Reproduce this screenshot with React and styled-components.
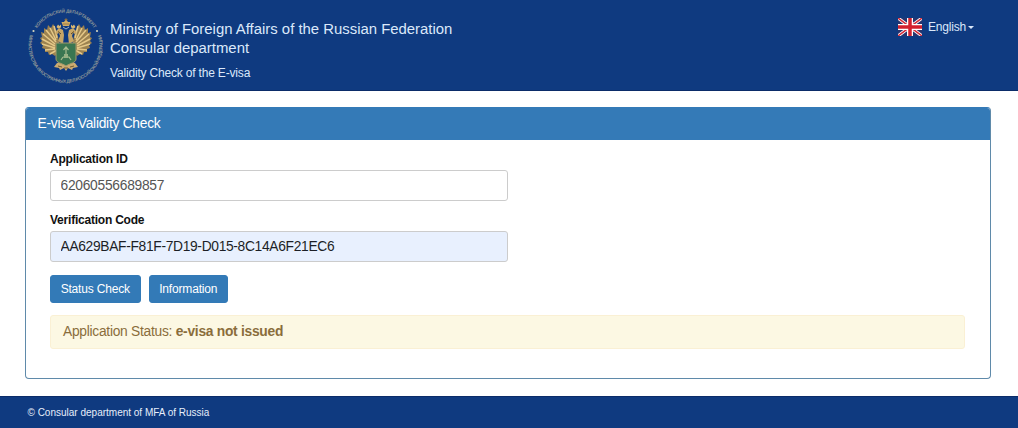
import React from 'react'
import styled, {createGlobalStyle, css} from 'styled-components'

const GlobalStyle = createGlobalStyle`
  * {
    box-sizing: border-box;
  }

  body {
    margin: 0;
    background: #fff;
    color: #111;
    font-family: "Liberation Sans", Arial, sans-serif;
  }
`

const small = css`
  font-size: 12px;
  letter-spacing: -0.18px;
`

const medium = css`
  font-size: 13.8px;
  letter-spacing: -0.27px;
`

const Page = styled.div`
  display: flex;
  flex-direction: column;
  height: 428px;
`

const TopBar = styled.header`
  display: flex;
  align-items: flex-start;
  height: 91px;
  padding: 7px 44px 0 27px;
  background: #0f3a80;
  border-bottom: 1px solid #0b2c69;
  color: #dbe8fa;
`

const Titles = styled.div`
  flex: 1;
  margin: 13px 0 0 7px;
`

const SiteName = styled.div`
  font-size: 14.9px;
  line-height: 19px;
`

const SiteSection = styled.div`
  ${small}
  margin-top: 7px;
  line-height: 16px;
`

const Language = styled.div`
  ${small}
  display: flex;
  align-items: center;
  margin-top: 10px;
  line-height: 20px;

  svg {
    margin-right: 5.5px;
  }
`

const Caret = styled.span`
  margin-left: 2px;
  border-top: 3.5px solid;
  border-right: 3.5px solid transparent;
  border-left: 3.5px solid transparent;
`

const Panel = styled.section`
  height: 272px;
  margin: 16px 27px 0 25px;
  border: 1px solid #5f8aaa;
  border-top-color: #347ab7;
  border-radius: 4px;
  overflow: hidden;
`

const PanelHeading = styled.h1`
  ${medium}
  height: 32px;
  margin: 0;
  padding-left: 11.5px;
  background: #347ab7;
  color: #fff;
  font-weight: 400;
  line-height: 31px;
`

const PanelBody = styled.div`
  padding: 11px 25px 0 24px;
`

const Label = styled.label`
  ${small}
  display: block;
  height: 19px;
  font-weight: 700;
  letter-spacing: -0.22px;
  line-height: 16px;
`

const Input = styled.input`
  ${medium}
  display: block;
  width: 458px;
  height: 31px;
  margin-bottom: 11px;
  padding: 0 9.5px 1px;
  border: 1px solid #ccc;
  border-radius: 3px;
  background: #fff;
  color: #555;
  font-family: inherit;
  outline: 0;

  ${({$filled}) => $filled && css`
    background: #e8f0fe;
    color: #1c1f26;
    letter-spacing: -0.32px;
  `}
`

const Buttons = styled.div`
  display: flex;
  gap: 8px;
  margin-top: 13px;
`

const Button = styled.button`
  ${small}
  width: ${({$width}) => $width}px;
  height: 28px;
  padding: 0 0 1px;
  border: 1px solid #337ab7;
  border-radius: 3px;
  background: #337ab7;
  color: #fff;
  font-family: inherit;
`

const Alert = styled.div`
  ${medium}
  height: 34px;
  margin-top: 12px;
  padding-left: 12px;
  border: 1px solid #faf0d4;
  border-radius: 3px;
  background: #fcf8e3;
  color: #8a6d3b;
  line-height: 32px;
`

const Footer = styled.footer`
  height: 32px;
  margin-top: auto;
  padding-left: 27.5px;
  background: #0f3a80;
  border-top: 1px solid #0b2c69;
  color: #e6eefb;
  font-size: 10px;
  line-height: 32px;
`

const Wing = () => (
  <g>
    <path d="M31 29L28 20L26 17L24 21L21 18L20 23L17 21L17 26L14 25L15 30L13 31L15 34L13 36L16 38L15 41L18 42L18 45L21 45L22 48L25 47L28 49L33 42Z" fill="#9c8250"/>
    <path d="M27 19L30 31M23 21L29 33M19 23L29 35M16 27L28 37M15 32L28 39M15 37L28 41M18 43L28 42M23 47L30 43" stroke="#e5c888" strokeWidth="1.5"/>
    <path d="M36 37L31 34L33 29L32 26L28 28L29 24L32 21L36 23L37 28Z" fill="#c8a666"/>
    <path d="M29.5 20L31 17.5L32.5 19L34 17.5L34 20.5L31 21.5Z" fill="#d9b873"/>
    <path d="M31 24.5L34 27" stroke="#5c4a2b"/>
  </g>
)

const Emblem = () => (
  <svg width="76" height="78" viewBox="0 0 76 78" fill="none">
    <defs>
      <path id="ringTop" d="M5 39A33.5 33.5 0 0 1 72 39"/>
      <path id="ringBottom" d="M5.5 22A37 37 0 1 0 71.5 22"/>
    </defs>
    <g fill="#8d9798" fontSize="4.6" fontWeight="700">
      <text textLength="68" textAnchor="middle"><textPath href="#ringTop" startOffset="50%">КОНСУЛЬСКИЙ ДЕПАРТАМЕНТ</textPath></text>
      <text textLength="138" textAnchor="middle"><textPath href="#ringBottom" startOffset="50%">МИНИСТЕРСТВА ИНОСТРАННЫХ ДЕЛ РОССИЙСКОЙ ФЕДЕРАЦИИ</textPath></text>
    </g>
    <circle cx="6.5" cy="24" r="1.1" fill="#d5d6bd"/>
    <circle cx="70" cy="24" r="1.1" fill="#d5d6bd"/>
    <Wing/>
    <g transform="translate(78 0) scale(-1 1)"><Wing/></g>
    <path d="M36 19L34.5 15L37 15L39 12L41 15L43.5 15L42 19Z" fill="#d0ac65"/>
    <path d="M39 11V14M37.5 12.5H40.5M36 17H42" stroke="#8f7040" strokeWidth="0.8"/>
    <path d="M36 20L39 22L42 20" stroke="#9faebc"/>
    <path d="M30 56L27 60L32 61L33 63L37 61L39 64L41 61L45 63L46 61L51 60L48 56Z" fill="#cbab70"/>
    <path d="M31 59L35 60M37 61H41M43 60L47 59" stroke="#6c5934"/>
    <path d="M29 36H49V52C49 56 43 56 39 59C35 56 29 56 29 52Z" fill="#3a7651" stroke="#a49a6d"/>
    <path d="M39 40V50M36.5 43L39 40L41.5 43M36 50L34 53M36 50H42L44 53" stroke="#a9bd91" strokeWidth="1.2"/>
    <path d="M37 47H41V51H37Z" fill="#96b184"/>
  </svg>
)

const Flag = () => (
  <svg width="24" height="18" viewBox="0 0 24 18">
    <path fill="#26356e" d="M0 0h24v18H0z"/>
    <path d="M0 0L24 18M24 0L0 18" stroke="#fff" strokeWidth="3.2"/>
    <path d="M0 0L24 18M24 0L0 18" stroke="#d32b3a" strokeWidth="1.5"/>
    <path d="M12 0V18M0 9H24" stroke="#fff" strokeWidth="6"/>
    <path d="M12 0V18M0 9H24" stroke="#d3202e" strokeWidth="3.5"/>
  </svg>
)

const App = () => (
  <Page>
    <GlobalStyle/>
    <TopBar>
      <Emblem/>
      <Titles>
        <SiteName>Ministry of Foreign Affairs of the Russian Federation</SiteName>
        <SiteName>Consular department</SiteName>
        <SiteSection>Validity Check of the E-visa</SiteSection>
      </Titles>
      <Language><Flag/>English<Caret/></Language>
    </TopBar>
    <Panel>
      <PanelHeading>E-visa Validity Check</PanelHeading>
      <PanelBody>
        <Label htmlFor="application">Application ID</Label>
        <Input id="application" defaultValue="62060556689857"/>
        <Label htmlFor="code">Verification Code</Label>
        <Input id="code" $filled defaultValue="AA629BAF-F81F-7D19-D015-8C14A6F21EC6"/>
        <Buttons>
          <Button $width={90.5}>Status Check</Button>
          <Button $width={79.5}>Information</Button>
        </Buttons>
        <Alert>Application Status: <b>e-visa not issued</b></Alert>
      </PanelBody>
    </Panel>
    <Footer>© Consular department of MFA of Russia</Footer>
  </Page>
)

export default App
